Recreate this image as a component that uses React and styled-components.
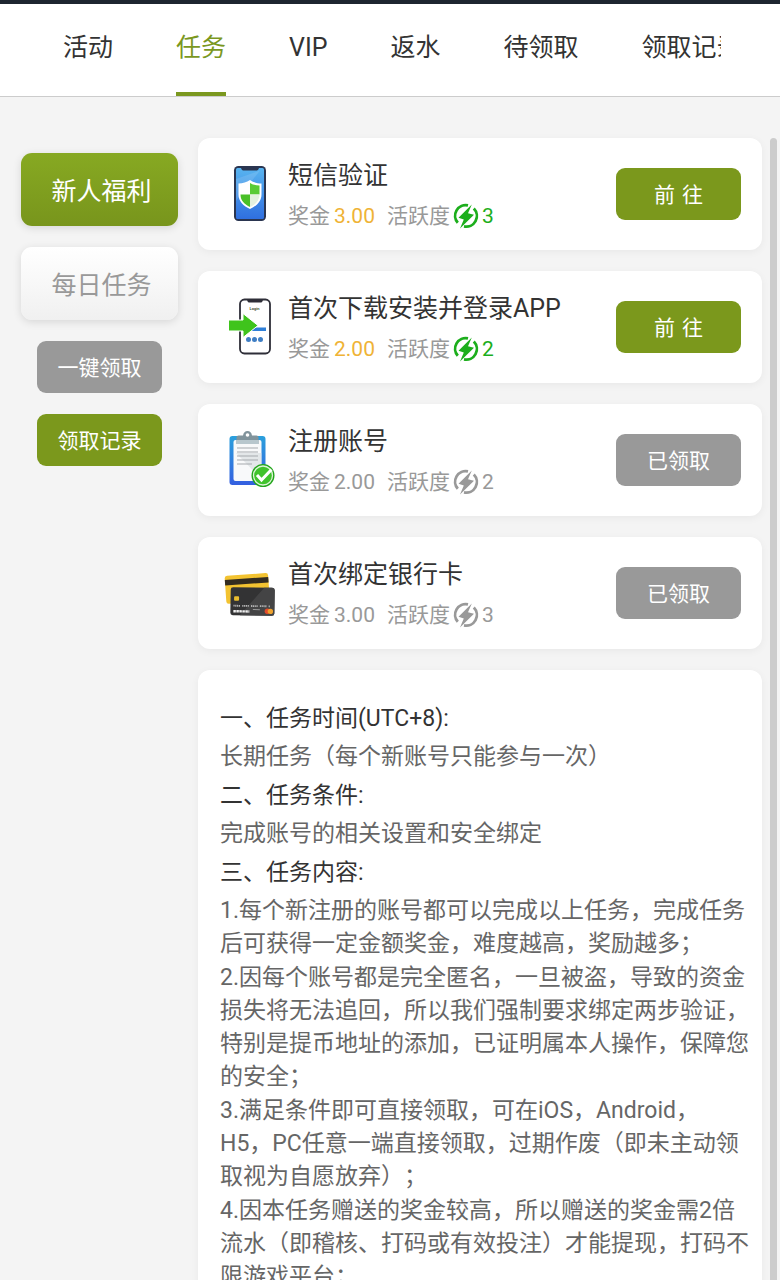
// Libraries
import React from "react";
import styled, { createGlobalStyle } from "styled-components";

const GlobalStyle = createGlobalStyle`
  * {
    box-sizing: border-box;
  }
  body {
    margin: 0;
    overflow: hidden;
    background: #f4f4f4;
    color: #333;
    font-family: Roboto, "Noto Sans CJK SC", sans-serif;
    font-weight: 400;
    text-spacing-trim: space-all;
  }
  h2, h3, p {
    margin: 0;
    font-weight: inherit;
  }
  button {
    border: none;
    padding: 0;
    font-family: inherit;
    cursor: pointer;
  }
`;

const Page = styled.div`
  height: 100vh;
  display: flex;
  flex-direction: column;
  overflow: hidden;
`;

const TabBar = styled.nav`
  flex: none;
  display: flex;
  height: 97px;
  padding: 0 59px 0 63px;
  background: #fff;
  border-top: 4px solid #1d2530;
  border-bottom: 1px solid #ccc;
`;

const TabScroller = styled.div`
  flex: 1;
  display: flex;
  gap: 63px;
  overflow: hidden;
`;

const Tab = styled.a`
  flex: none;
  padding-top: 4px;
  font-size: 25px;
  line-height: 80px;
  text-decoration: none;
  white-space: nowrap;
  color: ${(props) => (props.$active ? "#7b981f" : "#333")};
  border-bottom: 4px solid ${(props) => (props.$active ? "#7b981f" : "transparent")};
`;

const Body = styled.div`
  flex: 1;
  min-height: 0;
  display: flex;
  padding-top: 41px;
`;

const Sidebar = styled.aside`
  flex: none;
  width: 198px;
  display: flex;
  flex-direction: column;
  align-items: center;
  gap: 21px;
  padding: 15px 0 0 1px;
`;

const CategoryButton = styled.button`
  width: 157px;
  height: 73px;
  padding: 0 0 2px 4px;
  border-radius: 11px;
  font-size: 25px;
  color: ${(props) => (props.$active ? "#fff" : "#999")};
  background: ${(props) => (props.$active ? "linear-gradient(#87a922, #78951c)" : "linear-gradient(#fff, #f0f0f0)")};
  box-shadow: 0 2px 8px rgba(0, 0, 0, 0.12);
`;

const ActionButton = styled.button`
  flex: none;
  width: 125px;
  height: 52px;
  padding-bottom: 2px;
  border-radius: 9px;
  font-size: 21px;
  color: #fff;
  background: ${(props) => (props.$muted ? "#999" : "#7b981c")};
`;

const Content = styled.main`
  flex: 1;
  min-width: 0;
  display: flex;
  flex-direction: column;
  gap: 21px;
`;

const Card = styled.section`
  flex: none;
  border-radius: 12px;
  background: #fff;
  box-shadow: 0 2px 8px rgba(0, 0, 0, 0.05);
`;

const TaskCard = styled(Card)`
  display: flex;
  align-items: center;
  height: 112px;
  padding: 0 21px;
`;

const TaskIcon = styled.svg`
  flex: none;
  width: 60px;
  height: 60px;
`;

const TaskText = styled.div`
  flex: 1;
  min-width: 0;
  padding: 4px 0 0 9px;
`;

const TaskTitle = styled.h2`
  font-size: 25px;
  line-height: 40px;
`;

const TaskMeta = styled.div`
  display: flex;
  align-items: center;
  font-size: 21px;
  line-height: 40px;
  color: #999;
`;

const Amount = styled.span`
  margin: 0 12px 0 4px;
  color: ${(props) => (props.$muted ? "#999" : "#efb336")};
`;

const Points = styled.span`
  display: flex;
  align-items: center;
  gap: 3px;
  padding-left: 3px;
  color: ${(props) => (props.$muted ? "#999" : "#1cae1c")};
`;

const Rules = styled(Card)`
  padding: 32px 11px 32px 22px;
  font-size: 23px;
  line-height: 33px;
  color: #666;
`;

const RuleHeading = styled.h3`
  font-size: 23px;
  color: #333;
  margin-bottom: 5px;
`;

const RuleText = styled.p`
  margin-bottom: 6px;
`;

const RuleItem = styled.p`
  margin-bottom: 1px;
`;

const ScrollTrack = styled.div`
  flex: none;
  width: 18px;
  padding: 0 3px 0 8px;
`;

const ScrollThumb = styled.div`
  height: 100%;
  border-radius: 4px 4px 0 0;
  background: #ccc;
`;

const SmsIcon = () => (
  <TaskIcon viewBox="0 0 60 60" aria-hidden="true">
    <defs>
      <linearGradient id="smsScreen" x1="0" y1="0" x2="0" y2="1">
        <stop offset="0" stopColor="#58b4f0" />
        <stop offset="1" stopColor="#2f6fe0" />
      </linearGradient>
    </defs>
    <rect x="15" y="2" width="32" height="55" rx="4.5" fill="#2a3550" />
    <path d="M18.5 4H22c.6 2 1.500 2.500 3 2.500h12c1.500 0 2.400-.5 3-2.500h3.500q1.500 0 1.500 1.500v48q0 1.500-1.500 1.500h-25Q17 55 17 53.500v-48Q17 4 18.500 4z" fill="url(#smsScreen)" />
    <path d="M41 6.500 17 37v-22z" fill="#fff" opacity=".12" />
    <path d="M31 16c3.500 2.500 7 3.300 11.500 3.500v11c0 7-5 11.500-11.500 14.500-6.500-3-11.500-7.500-11.500-14.500v-11C24 19.300 27.500 18.500 31 16z" fill="#fff" />
    <path d="M31 19c2.800 1.700 5.500 2.300 9.500 2.500v9H31z" fill="#5acb35" />
    <path d="M21.500 30.500H31V43c-5.500-2.500-9.500-6.500-9.500-12.500z" fill="#4ac028" />
    <path d="M31 30.500h9.500c0 6-4 10-9.500 12.500z" fill="#e4f1df" />
  </TaskIcon>
);

const LoginIcon = () => (
  <TaskIcon viewBox="0 0 60 60" aria-hidden="true">
    <rect x="21" y="2.500" width="30" height="54" rx="4.500" fill="#fff" stroke="#2e2e38" strokeWidth="1.800" />
    <path d="M28 2.500h16c-.5 2.500-1 3-3 3H31c-2 0-2.500-.5-3-3z" fill="#2e2e38" />
    <text x="35.500" y="12.500" fontSize="4" fontWeight="700" textAnchor="middle" fill="#4a5a40">Login</text>
    <rect x="31" y="30.500" width="16" height="3.500" fill="#2f7fd8" />
    <circle cx="29.500" cy="42.500" r="2.500" fill="#3f7ec4" />
    <circle cx="35.500" cy="42.500" r="2.500" fill="#3f7ec4" />
    <circle cx="41.500" cy="42.500" r="2.500" fill="#3f7ec4" />
    <path d="M9.500 23H24v-6.500l15 12-15 12V34H9.500z" fill="#3fc41c" stroke="#fff" strokeWidth="1" />
  </TaskIcon>
);

const AccountIcon = () => (
  <TaskIcon viewBox="0 0 60 60" aria-hidden="true">
    <defs>
      <linearGradient id="board" x1="0" y1="0" x2="0" y2="1">
        <stop offset="0" stopColor="#2ba0dc" />
        <stop offset="1" stopColor="#345fe0" />
      </linearGradient>
    </defs>
    <rect x="10.500" y="6" width="36" height="49" rx="3" fill="url(#board)" />
    <rect x="14.500" y="10" width="28" height="41" rx="2" fill="#f8f9fa" />
    <path d="m17 23 25.500 26V23z" fill="#d5dade" opacity=".6" />
    <path d="M18 18h21M18 22h21M18 26h21M18 30h21M18 34h15" stroke="#a5a9ad" strokeWidth="1" />
    <path d="M17.500 7.500q0-2 2-2h4.500c.5-3 2-4.500 4.500-4.500S32.500 2.500 33 5.500h4.500q2 0 2 2v6.500h-22z" fill="#81949c" />
    <circle cx="28.500" cy="5" r="1.800" fill="#fff" />
    <rect x="17.500" y="10" width="22" height="4" fill="#b8c7cd" />
    <circle cx="44" cy="45.500" r="11.500" fill="#23a51b" />
    <circle cx="44" cy="45.500" r="9.500" fill="#40c32c" stroke="#ddf4d8" strokeWidth="1.300" />
    <path d="m38 45 4.500 5 10-10.500" fill="none" stroke="#fff" strokeWidth="3" />
  </TaskIcon>
);

const BankCardIcon = () => (
  <TaskIcon viewBox="0 0 60 60" aria-hidden="true">
    <g transform="rotate(-4 27 26)">
      <rect x="6.500" y="11.500" width="43.500" height="28" rx="2.500" fill="#f3c331" />
      <rect x="6.500" y="15.500" width="43.500" height="5.500" fill="#332c20" />
    </g>
    <g transform="rotate(1 32 40)">
      <rect x="11.500" y="24.500" width="44" height="28" rx="2.500" fill="#333334" />
      <path d="M45 24.500h8q2.500 0 2.500 2.500v23q0 2.500-2.500 2.500H21z" fill="#444445" />
      <rect x="15" y="33.500" width="5" height="4.500" rx="1" fill="#e9bd2e" />
      <path d="M14.500 43h37" stroke="#b5b5b5" strokeWidth="1.800" strokeDasharray="1.200 .6 1.200 .6 1.200 .6 1.200 2.200" />
      <path d="M14.500 48.500h16" stroke="#f0f0f0" strokeWidth="2.400" strokeDasharray="2.500 .5" />
      <path d="M34 46.500h7" stroke="#999" strokeWidth="1" />
      <circle cx="48.500" cy="48" r="2.700" fill="#e44b2c" />
      <circle cx="51.500" cy="48" r="2.700" fill="#efa32e" />
    </g>
  </TaskIcon>
);

const BoltIcon = () => (
  <svg width="26" height="26" viewBox="0 0 26 26" fill="none" aria-hidden="true">
    <path d="M15 2.400A10.600 10.600 0 0 0 4.800 19.800M20.800 5.600A10.600 10.600 0 0 1 11 23.400" stroke="currentColor" strokeWidth="2.800" />
    <path d="M18.800 1.500 5.500 14.800l5.300 1.700L7 25.500l14-13.800-6-1.500z" fill="currentColor" />
  </svg>
);

const tabs = ["活动", "任务", "VIP", "返水", "待领取", "领取记录"];

const tasks = [
  { title: "短信验证", amount: "3.00", points: 3, Icon: SmsIcon },
  { title: "首次下载安装并登录APP", amount: "2.00", points: 2, Icon: LoginIcon },
  { title: "注册账号", amount: "2.00", points: 2, Icon: AccountIcon, claimed: true },
  { title: "首次绑定银行卡", amount: "3.00", points: 3, Icon: BankCardIcon, claimed: true },
];

const ruleItems = [
  "1.每个新注册的账号都可以完成以上任务，完成任务后可获得一定金额奖金，难度越高，奖励越多；",
  "2.因每个账号都是完全匿名，一旦被盗，导致的资金损失将无法追回，所以我们强制要求绑定两步验证，特别是提币地址的添加，已证明属本人操作，保障您的安全；",
  "3.满足条件即可直接领取，可在iOS，Android，H5，PC任意一端直接领取，过期作废（即未主动领取视为自愿放弃）；",
  "4.因本任务赠送的奖金较高，所以赠送的奖金需2倍流水（即稽核、打码或有效投注）才能提现，打码不限游戏平台；",
];

function TaskRow(props) {
  const { title, amount, points, Icon, claimed } = props;

  return (
    <TaskCard>
      <Icon />
      <TaskText>
        <TaskTitle>{title}</TaskTitle>
        <TaskMeta>
          奖金
          <Amount $muted={claimed}>{amount}</Amount>
          活跃度
          <Points $muted={claimed}>
            <BoltIcon />
            {points}
          </Points>
        </TaskMeta>
      </TaskText>
      <ActionButton $muted={claimed}>{claimed ? "已领取" : "前\u2004往"}</ActionButton>
    </TaskCard>
  );
}

export default function App() {
  return (
    <Page>
      <GlobalStyle />
      <TabBar>
        <TabScroller>
          {tabs.map((tab) => (
            <Tab key={tab} href="#" $active={tab === "任务"}>
              {tab}
            </Tab>
          ))}
        </TabScroller>
      </TabBar>
      <Body>
        <Sidebar>
          <CategoryButton $active>新人福利</CategoryButton>
          <CategoryButton>每日任务</CategoryButton>
          <ActionButton $muted>一键领取</ActionButton>
          <ActionButton>领取记录</ActionButton>
        </Sidebar>
        <Content>
          {tasks.map((task) => (
            <TaskRow key={task.title} {...task} />
          ))}
          <Rules>
            <RuleHeading>一、任务时间(UTC+8):</RuleHeading>
            <RuleText>长期任务（每个新账号只能参与一次）</RuleText>
            <RuleHeading>二、任务条件:</RuleHeading>
            <RuleText>完成账号的相关设置和安全绑定</RuleText>
            <RuleHeading>三、任务内容:</RuleHeading>
            {ruleItems.map((item) => (
              <RuleItem key={item}>{item}</RuleItem>
            ))}
          </Rules>
        </Content>
        <ScrollTrack>
          <ScrollThumb />
        </ScrollTrack>
      </Body>
    </Page>
  );
}
